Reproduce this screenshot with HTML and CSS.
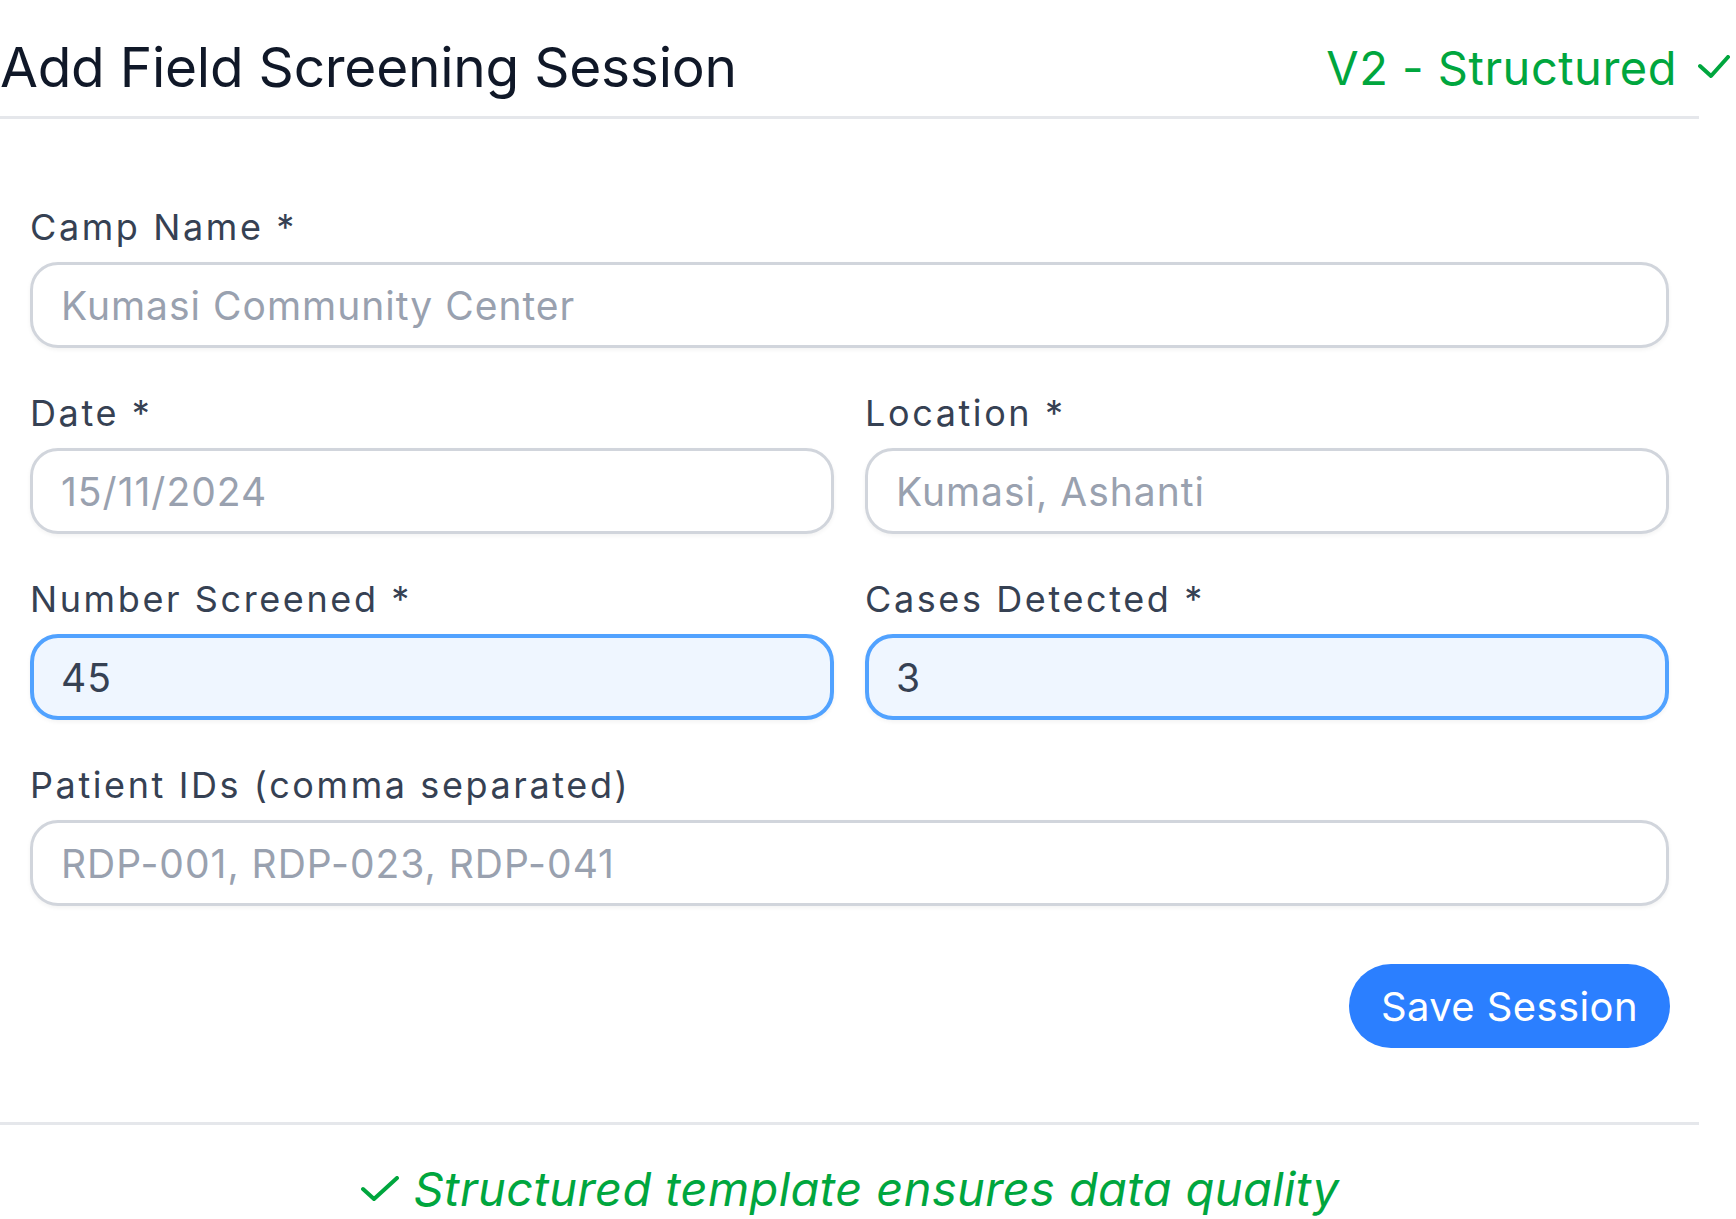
FILE: index.html
```html
<!DOCTYPE html>
<html lang="en">
<head>
    <meta charset="UTF-8">
    <meta name="viewport" content="width=device-width, initial-scale=1.0">
    <title>Add Field Screening Session</title>
    <link rel="stylesheet" href="styles.css">
</head>
<body>
    <div class="card">
        <header class="card-header">
            <h1>Add Field Screening Session</h1>
            <span class="version">V2 - Structured
                <svg class="check" width="32" height="24" viewBox="0 0 32 24"><path d="M2 11 L13 21 L30 2" /></svg>
            </span>
        </header>
        <div class="rule"></div>

        <form class="session-form">
            <div class="field">
                <label for="camp">Camp Name *</label>
                <input id="camp" type="text" placeholder="Kumasi Community Center">
            </div>

            <div class="field-row">
                <div class="field">
                    <label for="date">Date *</label>
                    <input id="date" type="text" placeholder="15/11/2024">
                </div>
                <div class="field">
                    <label for="location">Location *</label>
                    <input id="location" type="text" placeholder="Kumasi, Ashanti">
                </div>
            </div>

            <div class="field-row">
                <div class="field">
                    <label for="screened">Number Screened *</label>
                    <input id="screened" class="filled" type="text" value="45">
                </div>
                <div class="field">
                    <label for="cases">Cases Detected *</label>
                    <input id="cases" class="filled" type="text" value="3">
                </div>
            </div>

            <div class="field">
                <label for="patients">Patient IDs (comma separated)</label>
                <input id="patients" type="text" placeholder="RDP-001, RDP-023, RDP-041">
            </div>

            <div class="actions">
                <button type="button" class="save-btn">Save Session</button>
            </div>
        </form>

        <div class="rule"></div>
        <p class="footer-note">
            <svg class="check" width="40" height="26" viewBox="0 0 40 26"><path d="M3 13 L14 23 L37 2" /></svg>
            <em>Structured template ensures data quality</em>
        </p>
    </div>
</body>
</html>
```

FILE: styles.css
```css
body {
    margin: 0;
    background-color: #fff;
    font-family: Inter, "Noto Sans", sans-serif;
    overflow: hidden;
}
.card {
    width: 1699px;
}
.card-header {
    display: flex;
    justify-content: space-between;
    align-items: center;
    margin-right: -37px;
    padding: 34px 0 16px;
}
.card-header h1 {
    margin: 0;
    font-size: 55px;
    font-weight: 400;
    line-height: 66px;
    letter-spacing: -0.25px;
    color: #101828;
}
.version {
    display: flex;
    align-items: center;
    gap: 21px;
    font-size: 47px;
    letter-spacing: 0.5px;
    color: #00a63e;
    padding-right: 6px;
}
.check path {
    fill: none;
    stroke: #00a63e;
    stroke-width: 4;
    stroke-linecap: round;
    stroke-linejoin: round;
}
.rule {
    height: 3px;
    background-color: #e5e7eb;
}
.session-form {
    display: flex;
    flex-direction: column;
    gap: 38px;
    padding: 81px 30px 74px;
}
.field {
    display: flex;
    flex-direction: column;
    gap: 8px;
}
.field label {
    font-size: 36px;
    line-height: 54px;
    letter-spacing: 2.6px;
    color: #364153;
}
.field input {
    box-sizing: border-box;
    width: 100%;
    height: 86px;
    padding: 0 28px;
    font-family: inherit;
    font-size: 39px;
    letter-spacing: 1px;
    color: #364153;
    background-color: #fff;
    border: 3px solid #d1d5dc;
    border-radius: 28px;
    box-shadow: 0 2px 4px rgba(0, 0, 0, 0.05);
    outline: none;
}
.field input::placeholder {
    color: #99a1af;
}
.field input.filled {
    background-color: #eff6ff;
    border: 4px solid #51a2ff;
    padding: 0 27px;
}
.field-row {
    display: grid;
    grid-template-columns: 1fr 1fr;
    gap: 31px;
}
.actions {
    display: flex;
    justify-content: flex-end;
    margin-top: 20px;
}
.save-btn {
    height: 84px;
    padding: 0 32px;
    font-family: inherit;
    font-size: 40px;
    letter-spacing: 0.4px;
    color: #fff;
    background-color: #2b7fff;
    border: none;
    border-radius: 42px;
    margin-right: -1px;
}
.footer-note {
    display: flex;
    justify-content: center;
    align-items: center;
    gap: 14px;
    margin: 0;
    padding-top: 36px;
    font-size: 47px;
    line-height: 56px;
    letter-spacing: 0.4px;
    color: #00a63e;
}
```
